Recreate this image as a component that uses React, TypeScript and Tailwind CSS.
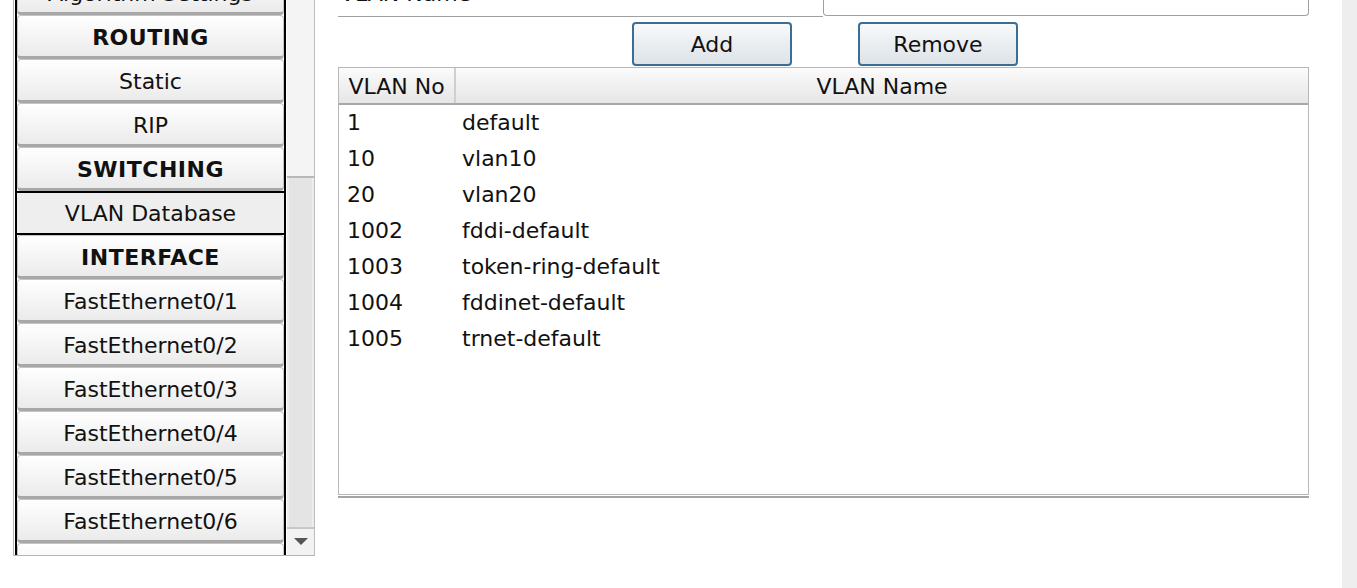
const font = "font-['DejaVu_Sans',_'Liberation_Sans',_sans-serif]";

type Item = { label: string; bold?: boolean; selected?: boolean };

const items: Item[] = [
  { label: "Algorithm Settings" },
  { label: "ROUTING", bold: true },
  { label: "Static" },
  { label: "RIP" },
  { label: "SWITCHING", bold: true },
  { label: "VLAN Database", selected: true },
  { label: "INTERFACE", bold: true },
  { label: "FastEthernet0/1" },
  { label: "FastEthernet0/2" },
  { label: "FastEthernet0/3" },
  { label: "FastEthernet0/4" },
  { label: "FastEthernet0/5" },
  { label: "FastEthernet0/6" },
  { label: "FastEthernet0/7" },
];

const vlans = [
  { no: "1", name: "default" },
  { no: "10", name: "vlan10" },
  { no: "20", name: "vlan20" },
  { no: "1002", name: "fddi-default" },
  { no: "1003", name: "token-ring-default" },
  { no: "1004", name: "fddinet-default" },
  { no: "1005", name: "trnet-default" },
];

function NavItem({ item }: { item: Item }) {
  if (item.selected) {
    return (
      <div className="flex h-[44px] shrink-0 items-center justify-center border-y-2 border-black bg-[#eeeeee] text-[22px] text-[#111]">
        {item.label}
      </div>
    );
  }
  return (
    <div
      className={`flex h-[44px] shrink-0 items-center justify-center rounded-[4px] border border-[#c4c4c4] border-b-[3px] border-b-[#a8a8a8] bg-gradient-to-b from-white to-[#ebebeb] pt-[2px] text-[22px] text-[#111] ${
        item.bold ? "font-bold tracking-[0.5px]" : ""
      }`}
    >
      {item.label}
    </div>
  );
}

function Sidebar() {
  return (
    <div className="ml-[13px] flex h-[556px] w-[302px] shrink-0 border-b border-l border-[#b4b4b4]">
      <div className="ml-px h-full w-[271px] overflow-hidden border-x-2 border-black bg-white">
        <div className="mt-[-29px] flex flex-col">
          {items.map((it) => (
            <NavItem key={it.label} item={it} />
          ))}
        </div>
      </div>
      <div className="ml-px flex h-full w-[28px] flex-col border-r border-[#bdbdbd]">
        <div className="h-[178px] border-b-2 border-[#b8b8b8] bg-[#f4f4f4]" />
        <div className="flex-1 border-x-2 border-[#ededed] bg-[#e4e4e4]" />
        <div className="flex h-[28px] items-center justify-center border-t-2 border-[#c8c8c8] bg-[#f2f2f2]">
          <svg width="14" height="8" viewBox="0 0 14 8">
            <path d="M0 0 H14 L7 7 Z" fill="#555" />
          </svg>
        </div>
      </div>
    </div>
  );
}

function VlanPanel() {
  return (
    <div className="ml-[23px] flex w-[971px] shrink-0 flex-col">
      <div className="flex h-[17px]">
        <div className="flex-1 overflow-hidden border-b border-[#a0a0a0]">
          <div className="mt-[-19px] pl-[2px] text-[22px] leading-[26px] text-[#111]">VLAN Name</div>
        </div>
        <div className="h-[16px] w-[486px] rounded-b-[4px] border border-t-0 border-[#a0a0a0] bg-white" />
      </div>

      <div className="mt-[5px] flex justify-center gap-[66px] pl-[3px]">
        <button className="flex h-[44px] w-[160px] items-center justify-center rounded-[4px] border-2 border-[#3b6e96] bg-gradient-to-b from-[#f8f9fa] to-[#dde3e8] text-[22px] text-[#111]">
          Add
        </button>
        <button className="flex h-[44px] w-[160px] items-center justify-center rounded-[4px] border-2 border-[#3b6e96] bg-gradient-to-b from-[#f8f9fa] to-[#dde3e8] text-[22px] text-[#111]">
          Remove
        </button>
      </div>

      <div className="mt-px flex flex-col">
        <div className="flex h-[428px] flex-col border-x border-y border-[#b8b8b8] bg-white">
          <div className="flex h-[37px] shrink-0 border-b-2 border-[#a8a8a8] bg-gradient-to-b from-[#fbfbfb] to-[#e6e6e6] text-[22px] text-[#111]">
            <div className="flex w-[117px] items-center justify-center border-r-2 border-r-[#cfcfcf] pt-[2px]">VLAN No</div>
            <div className="flex flex-1 items-center justify-center pt-[2px]">VLAN Name</div>
          </div>
          {vlans.map((v) => (
            <div key={v.no} className="flex h-[36px] shrink-0 items-center pb-[2px] text-[22px] text-[#111]">
              <div className="w-[117px] pl-2">{v.no}</div>
              <div className="flex-1 pl-[6px]">{v.name}</div>
            </div>
          ))}
        </div>
        <div className="mt-px h-[2px] bg-[#a4a4a4]" />
      </div>
    </div>
  );
}

export default function App() {
  return (
    <div className={`flex h-[588px] w-[1357px] overflow-hidden bg-white ${font}`}>
      <Sidebar />
      <VlanPanel />
      <div className="flex-1" />
      <div className="h-full w-[15px] bg-[#eeeeee]" />
    </div>
  );
}
